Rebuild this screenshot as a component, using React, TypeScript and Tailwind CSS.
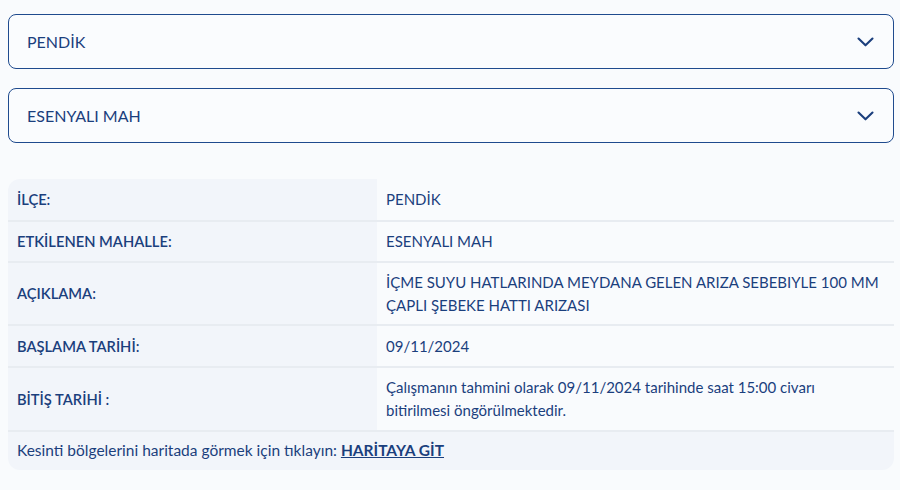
import React from 'react';

const rows: { label: string; value: React.ReactNode; h: string }[] = [
  { label: 'İLÇE:', value: 'PENDİK', h: 'h-[41px]' },
  { label: 'ETKİLENEN MAHALLE:', value: 'ESENYALI MAH', h: 'h-[39px]' },
  {
    label: 'AÇIKLAMA:',
    value: 'İÇME SUYU HATLARINDA MEYDANA GELEN ARIZA SEBEBIYLE 100 MM ÇAPLI ŞEBEKE HATTI ARIZASI',
    h: 'h-[61px]',
  },
  { label: 'BAŞLAMA TARİHİ:', value: '09/11/2024', h: 'h-[40px]' },
  {
    label: 'BİTİŞ TARİHİ :',
    value: 'Çalışmanın tahmini olarak 09/11/2024 tarihinde saat 15:00 civarı bitirilmesi öngörülmektedir.',
    h: 'h-[62px]',
  },
];

const Chevron = () => (
  <svg width="17" height="10" viewBox="0 0 17 10" fill="none" stroke="#1b3f7d" strokeWidth="2.1" strokeLinecap="round" strokeLinejoin="round">
    <path d="M1.5 1.5L8.5 8.3l7-6.8" />
  </svg>
);

const SelectBox = ({ text }: { text: string }) => (
  <div className="flex h-[55px] items-center justify-between rounded-lg border border-[#1f4b8e] bg-[#fafcfe] pl-[18px] pr-[19px]">
    <span className="text-[16px] text-[#1b3f7d]">{text}</span>
    <Chevron />
  </div>
);

export default function App() {
  return (
    <div
      className="min-h-[490px] bg-[#f9fbfd] pl-2 pr-[6px] pt-[14px] text-[#1b3f7d]"
      style={{ fontFamily: 'Lato, "Noto Sans", sans-serif' }}
    >
      <div className="flex flex-col gap-[19px]">
        <SelectBox text="PENDİK" />
        <SelectBox text="ESENYALI MAH" />
      </div>

      <div className="mt-[36px] overflow-hidden rounded-xl">
        {rows.map((r, i) => (
          <div key={i} className={`grid grid-cols-[369px_1fr] ${i > 0 ? 'border-t-2 border-[#e8ecf1]' : ''}`}>
            <div className={`flex items-center bg-[#f2f5fa] px-[9px] text-[14.7px] font-semibold ${r.h}`}>
              {r.label}
            </div>
            <div className={`flex items-center bg-[#f9fbfd] pl-[9px] pr-3 text-[15px] leading-[23px] ${r.h}`}>
              {r.value}
            </div>
          </div>
        ))}
        <div className="flex h-[40px] items-center border-t-2 border-[#e8ecf1] bg-[#f2f5fa] px-[9px] text-[15.5px]">
          <span>Kesinti bölgelerini haritada görmek için tıklayın:&nbsp;</span>
          <a href="#" className="font-bold underline">HARİTAYA GİT</a>
        </div>
      </div>
    </div>
  );
}
